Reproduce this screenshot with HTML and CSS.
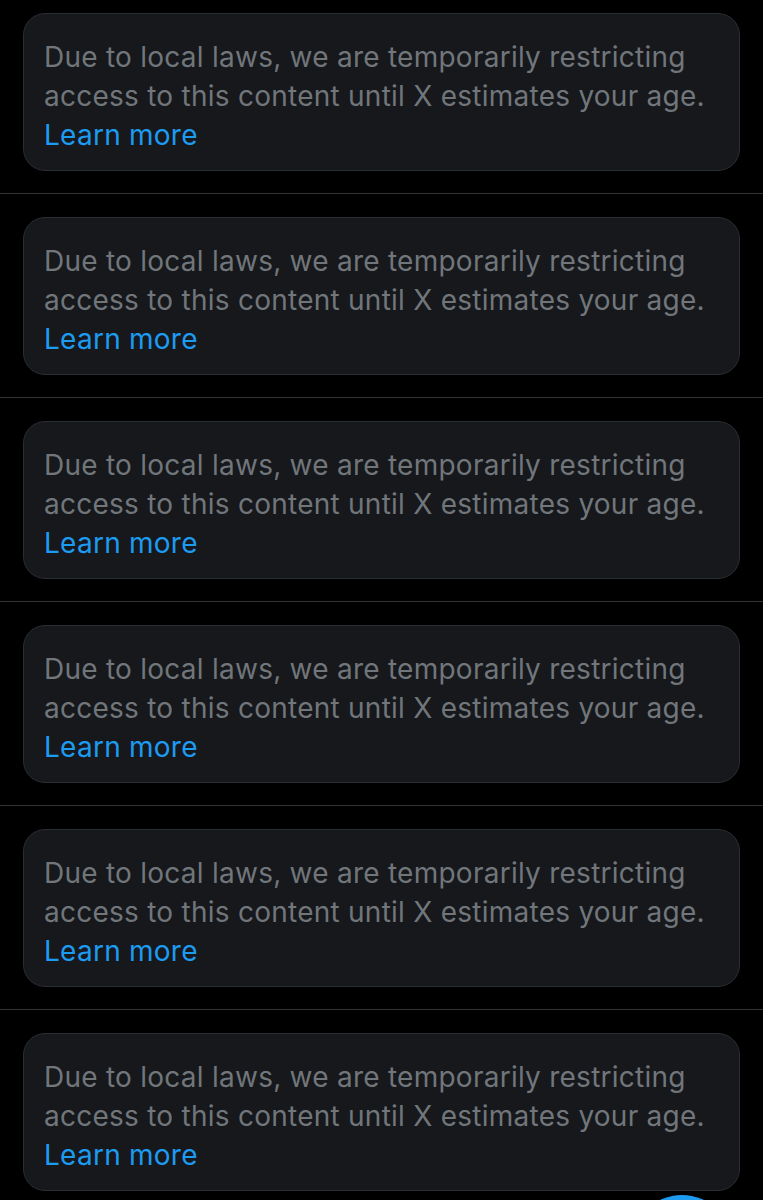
FILE: index.html
```html
<!DOCTYPE html>
<html>
<head>
<meta charset="utf-8">
<link rel="stylesheet" href="styles.css">
</head>
<body>
<main class="feed">
  <section class="item">
    <div class="notice">Due to local laws, we are temporarily restricting access to this content until X estimates your age. <a class="link" href="#">Learn more</a></div>
  </section>
  <section class="item">
    <div class="notice">Due to local laws, we are temporarily restricting access to this content until X estimates your age. <a class="link" href="#">Learn more</a></div>
  </section>
  <section class="item">
    <div class="notice">Due to local laws, we are temporarily restricting access to this content until X estimates your age. <a class="link" href="#">Learn more</a></div>
  </section>
  <section class="item">
    <div class="notice">Due to local laws, we are temporarily restricting access to this content until X estimates your age. <a class="link" href="#">Learn more</a></div>
  </section>
  <section class="item">
    <div class="notice">Due to local laws, we are temporarily restricting access to this content until X estimates your age. <a class="link" href="#">Learn more</a></div>
  </section>
  <section class="item">
    <div class="notice">Due to local laws, we are temporarily restricting access to this content until X estimates your age. <a class="link" href="#">Learn more</a></div>
  </section>
</main>
<div class="fab"></div>
</body>
</html>
```
FILE: styles.css
```css
html, body {
  margin: 0;
  padding: 0;
  background: #000;
  height: 1200px;
  overflow: hidden;
}
body {
  position: relative;
  font-family: Inter, "Noto Sans", sans-serif;
}
.feed {
  display: flex;
  flex-direction: column;
  margin-top: -10px;
}
.item {
  padding: 23px 23px 22px 23px;
  border-bottom: 1px solid #2f3336;
}
.notice {
  background: #16181c;
  border: 1px solid #2a2d31;
  border-radius: 22px;
  padding: 24px 20px 15px 20px;
  font-size: 28px;
  letter-spacing: 0.25px;
  line-height: 39px;
  color: #71767b;
  height: 158px;
  box-sizing: border-box;
}
.link {
  color: #1d9bf0;
  text-decoration: none;
  display: block;
}
.fab {
  position: absolute;
  left: 632px;
  top: 1195px;
  width: 100px;
  height: 100px;
  border-radius: 50%;
  background: #1d9bf0;
}
```
